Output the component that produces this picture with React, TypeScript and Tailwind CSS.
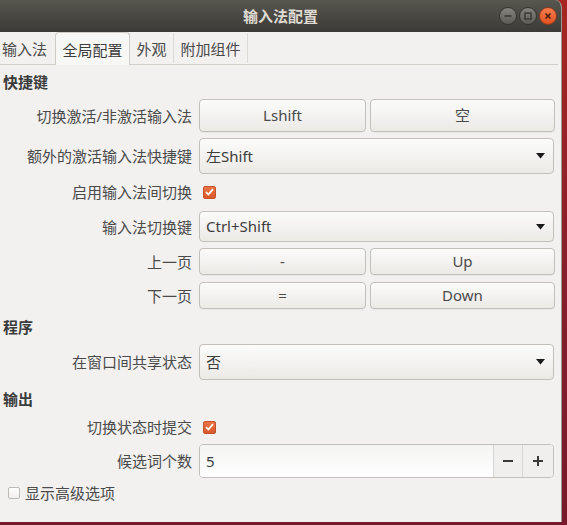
import React from 'react';

const FONT = "font-[family-name:'Noto_Sans','Noto_Sans_CJK_SC',sans-serif]";

function Label({ text }: { text: string }) {
  return (
    <div className="w-[192px] shrink-0 text-right text-[15px] leading-[18px] text-[#4a4a4a]">
      {text}
    </div>
  );
}

function Button({ text, className = '' }: { text: string; className?: string }) {
  return (
    <div
      className={`flex items-center justify-center rounded-[4px] border border-[#c3c0bb] bg-gradient-to-b from-[#fbfbfa] to-[#eceae7] text-[15px] text-[#4a4a4a] shadow-[0_1px_0_rgba(0,0,0,0.04)] ${className}`}
    >
      {text}
    </div>
  );
}

function Combo({ text, h }: { text: string; h: string }) {
  return (
    <div
      className={`flex w-[355px] items-center justify-between rounded-[4px] border border-[#c3c0bb] bg-gradient-to-b from-[#fbfbfa] to-[#eceae7] pl-[6px] pr-[8px] text-[15px] text-[#3c3c3c] ${h}`}
    >
      <span>{text}</span>
      <svg width="9" height="6" viewBox="0 0 9 6">
        <path d="M0 0 L9 0 L4.5 5.5 Z" fill="#1a1a1a" />
      </svg>
    </div>
  );
}

function CheckBox({ checked }: { checked: boolean }) {
  if (!checked) {
    return (
      <div className="h-[12px] w-[12px] rounded-[2px] border border-[#bdbab5] bg-gradient-to-b from-[#ffffff] to-[#f0efed]" />
    );
  }
  return (
    <div className="flex h-[13px] w-[13px] items-center justify-center rounded-[2px] border border-[#c4532a] bg-gradient-to-b from-[#ec7445] to-[#d9582a]">
      <svg width="9" height="8" viewBox="0 0 9 8">
        <path d="M1 4.2 L3.4 6.5 L8 1.2" stroke="#ffffff" strokeWidth="1.8" fill="none" />
      </svg>
    </div>
  );
}

function Header({ text, className = '' }: { text: string; className?: string }) {
  return (
    <div className={`h-[18px] pl-[3px] text-[15px] font-bold leading-[18px] text-[#3c3c3c] ${className}`}>
      {text}
    </div>
  );
}

function Row({ label, children, className = '' }: { label: string; children: React.ReactNode; className?: string }) {
  return (
    <div className={`flex items-center gap-[7px] ${className}`}>
      <Label text={label} />
      {children}
    </div>
  );
}

function WinButton({ kind }: { kind: 'min' | 'max' | 'close' }) {
  const isClose = kind === 'close';
  return (
    <div
      className={`flex h-[18px] w-[18px] items-center justify-center rounded-full border ${
        isClose
          ? 'border-[#8f3a1d] bg-gradient-to-b from-[#f77c4d] to-[#e1521f]'
          : 'border-[#36352f] bg-gradient-to-b from-[#86847e] to-[#5c5b56]'
      }`}
    >
      <svg width="10" height="10" viewBox="0 0 10 10">
        {kind === 'min' && <path d="M1.5 5 H8.5" stroke="#38372f" strokeWidth="1.6" />}
        {kind === 'max' && <rect x="2" y="2" width="6" height="6" stroke="#38372f" strokeWidth="1.4" fill="none" />}
        {kind === 'close' && <path d="M2.5 2.5 L7.5 7.5 M7.5 2.5 L2.5 7.5" stroke="#4a1a0b" strokeWidth="1.5" />}
      </svg>
    </div>
  );
}

export default function App() {
  return (
    <div className={`h-[525px] w-[567px] overflow-hidden bg-gradient-to-b from-[#a6271f] via-[#87202a] to-[#761a2b] ${FONT}`}>
      <div className="flex h-[522px] w-[562px] flex-col overflow-hidden rounded-tr-[7px] border-r border-[#9a9893] bg-[#f2f1f0]">
        {/* Title bar */}
        <div className="relative flex h-[32px] shrink-0 items-center justify-center bg-gradient-to-b from-[#57564f] to-[#3c3b37]">
          <span className="text-[15px] font-bold text-[#dfdbd2]">输入法配置</span>
          <div className="absolute right-[4px] top-[7px] flex gap-[2px]">
            <WinButton kind="min" />
            <WinButton kind="max" />
            <WinButton kind="close" />
          </div>
        </div>

        {/* Tabs */}
        <div className="flex h-[32px] shrink-0 items-stretch text-[15px] text-[#4a4a4a]">
          <div className="flex w-[55px] items-center justify-center pr-[6px] pt-[2px]">输入法</div>
          <div className="relative z-10 flex h-[33px] w-[75px] items-center justify-center rounded-t-[4px] border border-b-0 border-[#cfccc7] bg-[#f7f7f6] pt-[2px] text-[#3c3c3c]">
            全局配置
          </div>
          <div className="my-[1px] flex w-[44px] items-center justify-center border-r border-[#dcdad6] pt-[2px]">外观</div>
          <div className="my-[1px] flex w-[74px] items-center justify-center border-r border-[#dcdad6] pt-[2px]">附加组件</div>
        </div>

        {/* Panel */}
        <div className="flex flex-1 flex-col border-t border-[#d3d0cb] mr-[3px]">
          <Header text="快捷键" className="mt-[8px]" />

          <Row label="切换激活/非激活输入法" className="mt-[8px]">
            <div className="flex gap-[4px]">
              <Button text="Lshift" className="h-[33px] w-[167px]" />
              <Button text="空" className="h-[33px] w-[185px]" />
            </div>
          </Row>

          <Row label="额外的激活输入法快捷键" className="mt-[6px]">
            <Combo text="左Shift" h="h-[36px]" />
          </Row>

          <Row label="启用输入法间切换" className="mt-[4px] h-[28px]">
            <div className="pl-[4px]">
              <CheckBox checked />
            </div>
          </Row>

          <Row label="输入法切换键" className="mt-[5px]">
            <Combo text="Ctrl+Shift" h="h-[31px]" />
          </Row>

          <Row label="上一页" className="mt-[6px]">
            <div className="flex gap-[4px]">
              <Button text="-" className="h-[27px] w-[167px]" />
              <Button text="Up" className="h-[27px] w-[185px]" />
            </div>
          </Row>

          <Row label="下一页" className="mt-[7px]">
            <div className="flex gap-[4px]">
              <Button text="=" className="h-[27px] w-[167px]" />
              <Button text="Down" className="h-[27px] w-[185px]" />
            </div>
          </Row>

          <Header text="程序" className="mt-[9px]" />

          <Row label="在窗口间共享状态" className="mt-[8px]">
            <Combo text="否" h="h-[36px]" />
          </Row>

          <Header text="输出" className="mt-[10px]" />

          <Row label="切换状态时提交" className="mt-[5px] h-[28px]">
            <div className="pl-[4px]">
              <CheckBox checked />
            </div>
          </Row>

          <Row label="候选词个数" className="mt-[3px]">
            <div className="flex h-[34px] w-[355px] overflow-hidden rounded-[4px] border border-[#c3c0bb] bg-white text-[15px] text-[#3c3c3c]">
              <div className="flex flex-1 items-center bg-gradient-to-b from-[#f4f4f3] to-[#ffffff] pl-[6px]">5</div>
              <div className="flex w-[29px] items-center justify-center border-l border-[#d8d6d2] bg-[#f0efed]">
                <svg width="12" height="12" viewBox="0 0 12 12">
                  <path d="M1 6 H11" stroke="#3a3a3a" strokeWidth="2" />
                </svg>
              </div>
              <div className="flex w-[31px] items-center justify-center border-l border-[#d8d6d2] bg-[#f0efed]">
                <svg width="12" height="12" viewBox="0 0 12 12">
                  <path d="M1 6 H11 M6 1 V11" stroke="#3a3a3a" strokeWidth="2" />
                </svg>
              </div>
            </div>
          </Row>

          <div className="mt-[6px] flex h-[18px] items-center gap-[5px] pl-[8px] text-[15px] text-[#4a4a4a]">
            <CheckBox checked={false} />
            <span>显示高级选项</span>
          </div>
        </div>
      </div>
    </div>
  );
}
